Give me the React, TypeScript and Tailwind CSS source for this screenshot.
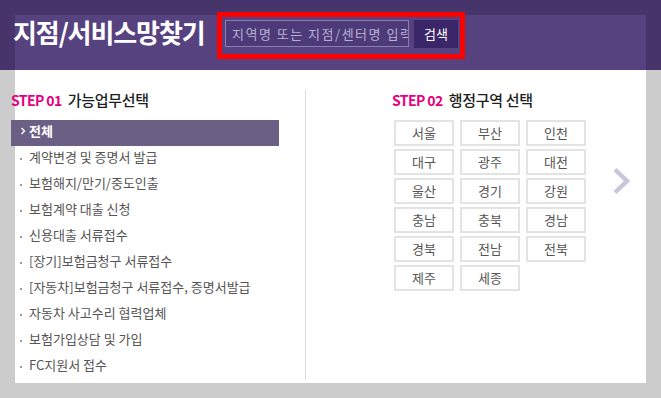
import React from 'react';

const tasks = [
  '계약변경 및 증명서 발급',
  '보험해지/만기/중도인출',
  '보험계약 대출 신청',
  '신용대출 서류접수',
  '[장기]보험금청구 서류접수',
  '[자동차]보험금청구 서류접수, 증명서발급',
  '자동차 사고수리 협력업체',
  '보험가입상담 및 가입',
  'FC지원서 접수',
];

const regions = ['서울', '부산', '인천', '대구', '광주', '대전', '울산', '경기', '강원', '충남', '충북', '경남', '경북', '전남', '전북', '제주', '세종'];

const StepTitle: React.FC<{ num: string; label: string }> = ({ num, label }) => (
  <div className="h-[22px] leading-[22px] whitespace-nowrap">
    <span className="text-[14px] font-bold text-[#e4007f] tracking-[-0.6px]">STEP {num}</span>
    <span className="ml-[6px] text-[15px] font-medium text-[#1e1e1e] tracking-[-0.3px]">{label}</span>
  </div>
);

export default function App() {
  return (
    <div className="w-[661px] h-[398px] bg-[#cccccc] overflow-hidden font-['Noto_Sans_CJK_KR','Noto_Sans',sans-serif]">
      {/* header */}
      <div className="h-[70px] bg-[#46346a] pt-[15px] px-[15px]">
        <div className="h-[55px] bg-[#56427f] flex items-start">
          <h1 className="w-[204px] -ml-[2px] mt-[2px] text-[26px] leading-[30px] font-bold text-white tracking-[-1.1px] whitespace-nowrap">
            지점/서비스망찾기
          </h1>
          <div className="-mt-[3px] w-[248px] h-[47px] border-[5px] border-[#ff0000] flex items-start pt-[3px] pl-[3px] gap-[5px]">
            <div className="w-[184px] h-[27px] border border-[#8c7cb2] bg-[#4c3a79] pl-[6px] overflow-hidden whitespace-nowrap text-[13px] leading-[25px] text-[#b9afd3] tracking-[1.5px]">
              지역명 또는 지점/센터명 입력
            </div>
            <button className="w-[44px] h-[28px] bg-[#3b2669] text-white text-[13px] leading-[28px]">검색</button>
          </div>
        </div>
      </div>

      {/* body */}
      <div className="px-[15px]">
        <div className="h-[313px] bg-white flex items-start">
          {/* step 01 */}
          <div className="-ml-[4px] w-[268px] pt-[18px]">
            <StepTitle num="01" label="가능업무선택" />
            <ul className="mt-[10px]">
              <li className="h-[26px] bg-[#6c5f86] flex items-start">
                <svg width="9" height="22" viewBox="0 0 9 22" className="ml-[9px] shrink-0">
                  <polyline points="1.5,8 4.5,11 1.5,14" fill="none" stroke="#fff" strokeWidth="1.4" />
                </svg>
                <span className="text-[13px] leading-[22px] font-bold text-white">전체</span>
              </li>
              {tasks.map((t) => (
                <li key={t} className="h-[26px] flex items-start">
                  <span className="ml-[9px] w-[9px] h-[22px] flex items-center shrink-0">
                    <span className="block w-[2px] h-[2px] bg-[#9a9a9a] mt-[3px]" />
                  </span>
                  <span className="text-[13px] leading-[22px] text-[#555555] whitespace-nowrap">{t}</span>
                </li>
              ))}
            </ul>
          </div>

          {/* divider */}
          <div className="ml-[26px] mt-[20px] w-px h-[290px] bg-[#dddddd]" />

          {/* step 02 */}
          <div className="ml-[86px] pt-[18px]">
            <StepTitle num="02" label="행정구역 선택" />
            <div className="mt-[10px] ml-[2px] grid grid-cols-[60px_60px_60px] auto-rows-[26px] gap-x-[6px] gap-y-[3px]">
              {regions.map((r) => (
                <div key={r} className="border-2 border-[#e3e3e3] text-center text-[13px] leading-[22px] text-[#555555]">
                  {r}
                </div>
              ))}
            </div>
          </div>

          <svg width="20" height="28" viewBox="0 0 20 28" className="ml-[26px] mt-[97px] shrink-0">
            <polyline points="3,2.5 15,14 3,25.5" fill="none" stroke="#cbc4dd" strokeWidth="4.5" />
          </svg>
        </div>
      </div>
    </div>
  );
}
